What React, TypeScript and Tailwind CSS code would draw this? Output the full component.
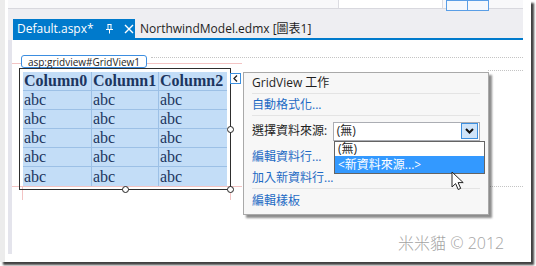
import React from "react";

const ui = "font-['Open_Sans','Noto_Sans_CJK_TC',sans-serif]";
const serif = "font-['Liberation_Serif','Times_New_Roman',serif]";

const rows = ["abc", "abc", "abc", "abc", "abc"];

function PinIcon() {
  return (
    <svg width="9" height="11" viewBox="0 0 9 11" className="shrink-0">
      <path d="M2.5 1.5h4M3 1.5v4.5M6 1.5v4.5M1 6.5h7M4.5 6.5v4" stroke="#fff" strokeWidth="1" fill="none" />
    </svg>
  );
}

function CloseIcon() {
  return (
    <svg width="10" height="10" viewBox="0 0 10 10" className="shrink-0">
      <path d="M1 1l8 8M9 1l-8 8" stroke="#fff" strokeWidth="1.4" fill="none" />
    </svg>
  );
}

function Cursor() {
  return (
    <svg width="14" height="20" viewBox="0 0 14 20">
      <path
        d="M1 1v15l3.6-3.4 2.6 5.9 2.5-1.1-2.6-5.8h5.1z"
        fill="#fff"
        stroke="#222"
        strokeWidth="1"
        strokeLinejoin="round"
      />
    </svg>
  );
}

function GridTable() {
  return (
    <div className={`${serif} bg-[#c3ddf7] text-[#1c3560] text-[16px] leading-none`}>
      <div className="flex h-[19px] border-b border-[#9cc0e6] font-bold">
        <div className="w-[69px] border-r border-[#9cc0e6] pl-[1px] flex items-center">Column0</div>
        <div className="w-[67px] border-r border-[#9cc0e6] pl-[1px] flex items-center">Column1</div>
        <div className="w-[68px] pl-[1px] flex items-center">Column2</div>
      </div>
      {rows.map((r, i) => (
        <div key={i} className={`flex h-[19px] ${i < rows.length - 1 ? "border-b border-[#9cc0e6]" : ""}`}>
          <div className="w-[69px] border-r border-[#9cc0e6] pl-[1px] flex items-center">{r}</div>
          <div className="w-[67px] border-r border-[#9cc0e6] pl-[1px] flex items-center">{r}</div>
          <div className="w-[68px] pl-[1px] flex items-center">{r}</div>
        </div>
      ))}
    </div>
  );
}

function TaskPanel() {
  return (
    <div
      className={`${ui} absolute left-[243px] top-[72px] w-[246px] h-[143px] bg-[#f7f7f7] border border-[#a9a9a9] shadow-[3px_3px_2px_rgba(0,0,0,0.45)] text-[12px] flex flex-col px-[8px]`}
    >
      <div className="h-[21px] flex items-center text-[#1e1e1e] border-b border-[#e4e4e4]">GridView 工作</div>
      <div className="h-[22px] flex items-center text-[#1d6ac4] border-b border-[#e4e4e4]">自動格式化...</div>
      <div className="h-[30px] flex items-center text-[#1e1e1e]">
        <span className="w-[83px]">選擇資料來源:</span>
        <div className="w-[151px] h-[19px] bg-white border border-[#abadb3] flex items-center justify-between pl-[3px] pr-[1px]">
          <span>(無)</span>
          <div className="w-[17px] h-[16px] bg-[#cfe4f9] border border-[#3c8fdf] flex items-center justify-center">
            <svg width="9" height="6" viewBox="0 0 9 6">
              <path d="M1 1l3.5 3.5L8 1" stroke="#111" strokeWidth="2" fill="none" />
            </svg>
          </div>
        </div>
      </div>
      <div className="h-[22px] flex items-center text-[#1d6ac4]">編輯資料行...</div>
      <div className="h-[21px] flex items-center text-[#1d6ac4] border-b border-[#e4e4e4]">加入新資料行...</div>
      <div className="h-[24px] flex items-center text-[#1d6ac4]">編輯樣板</div>
    </div>
  );
}

export default function App() {
  return (
    <div className="relative w-[536px] h-[266px] bg-white overflow-hidden">
      <div className="w-[531px] h-[262px] bg-white border-l-[5px] border-[#ececec] shadow-[3px_3px_2px_rgba(0,0,0,0.75)] pl-[3px] pr-[8px] pb-[8px] flex">
        <div className="w-[515px] h-[254px] bg-[#eeeef2] flex flex-col">
          {/* toolbar remnants */}
          <div className="h-[9px] bg-[#f8f8fa] border-b border-[#d8d8de] flex items-start">
            <div className="ml-[330px] w-[105px] h-[8px] bg-white border-x border-[#dcdce2]" />
            <div className="ml-[3px] w-[22px] h-[11px] border border-[#5a9ee6] bg-[#f4f8fd]" />
            <div className="w-[21px] h-[11px] border border-[#5a9ee6] border-l-0 bg-[#f4f8fd]" />
          </div>
          <div className="h-[10px]" />
          {/* tab strip */}
          <div className={`${ui} h-[19px] flex items-stretch text-[12px]`}>
            <div className="ml-[5px] w-[122px] bg-[#007acc] text-white flex items-center pl-[4px]">
              <span>Default.aspx*</span>
              <span className="ml-[11px]"><PinIcon /></span>
              <span className="ml-[10px]"><CloseIcon /></span>
            </div>
            <div className="ml-[5px] flex items-center text-[#1e1e1e]">NorthwindModel.edmx [圖表1]</div>
          </div>
          <div className="h-[2px] ml-[5px] bg-[#007acc]" />
          {/* design surface */}
          <div className="relative flex-1 bg-white border-l-4 border-[#e4e4ec]">
            <div className="absolute left-0 w-[230px] top-[23px] border-t border-[#f3c4c4]" />
            <div className="absolute left-0 w-[230px] top-[146px] border-t border-[#f3c4c4]" />
            <div className="absolute left-[10px] top-[146px] h-[14px] border-l border-[#f3c4c4]" />
            <div className="absolute left-[218px] top-[146px] h-[14px] border-l border-[#f3c4c4]" />
            <div className="absolute left-[139px] right-0 top-[17px] border-t border-dotted border-[#c4c4c4]" />
            <div className="absolute left-[476px] right-0 top-[30px] border-t border-dotted border-[#c4c4c4]" />
            <div className="absolute left-[476px] right-0 top-[146px] border-t border-dotted border-[#c4c4c4]" />

            <div className="relative ml-[9px] mt-[15px] w-[126px] h-[13px] bg-white border border-[#3d8ee0] rounded-[3px] flex items-center justify-center">
              <span className={`${ui} text-[10px] leading-none text-[#1e1e1e]`}>asp:gridview#GridView1</span>
            </div>
            <div className="relative ml-[7px] w-[212px] border border-[#2e2e2e] p-[3px]">
              <GridTable />
            </div>
          </div>
        </div>
      </div>

      {/* selection handles */}
      <div className="absolute left-[227px] top-[126px] w-[7px] h-[7px] rounded-full border border-[#222] bg-white" />
      <div className="absolute left-[122px] top-[186px] w-[7px] h-[7px] rounded-full border border-[#222] bg-white" />
      <div className="absolute left-[227px] top-[186px] w-[7px] h-[7px] rounded-full border border-[#222] bg-white" />

      {/* smart tag */}
      <div className="absolute left-[230px] top-[73px] w-[11px] h-[11px] bg-white border border-[#3c8fdf] flex items-center justify-center">
        <svg width="5" height="7" viewBox="0 0 5 7">
          <path d="M4 0.5L1 3.5L4 6.5" stroke="#222" strokeWidth="1.3" fill="none" />
        </svg>
      </div>

      <TaskPanel />

      {/* open dropdown list */}
      <div className={`${ui} absolute left-[334px] top-[141px] w-[151px] bg-white border border-[#646464] text-[12px] leading-none`}>
        <div className="h-[14px] flex items-center pl-[3px] text-[#1e1e1e]">(無)</div>
        <div className="h-[17px] flex items-center pl-[3px] bg-[#3399ff] text-white">&lt;新資料來源...&gt;</div>
      </div>

      <div className="absolute left-[451px] top-[171px]">
        <Cursor />
      </div>

      <div className={`absolute left-[398px] top-[231px] font-['Open_Sans','Noto_Sans_CJK_TC',sans-serif] font-light text-[16px] text-[#a3a3a3]`}>
        米米貓 © 2012
      </div>
    </div>
  );
}
